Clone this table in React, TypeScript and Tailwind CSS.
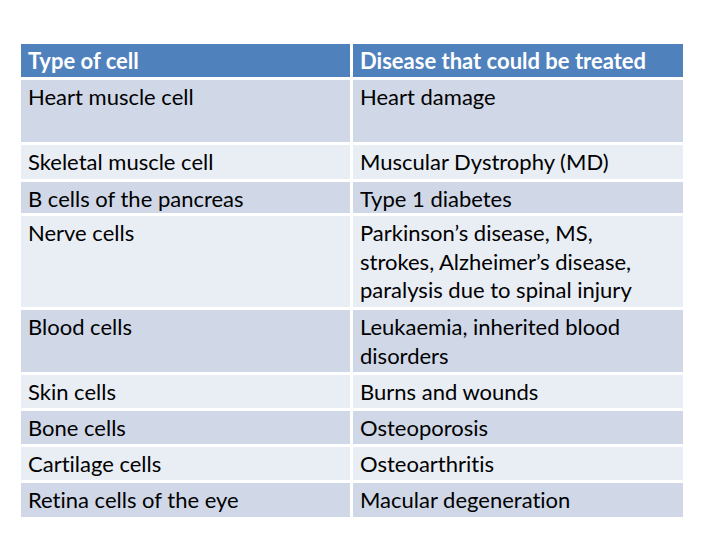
import React from "react";

type Row = {
  cell: React.ReactNode;
  disease: React.ReactNode;
  h: string;
  tone: "dark" | "light";
};

const rows: Row[] = [
  { cell: "Heart muscle cell", disease: "Heart damage", h: "h-[62px]", tone: "dark" },
  { cell: "Skeletal muscle cell", disease: "Muscular Dystrophy (MD)", h: "h-[34px]", tone: "light" },
  { cell: "B cells of the pancreas", disease: "Type 1 diabetes", h: "h-[31px]", tone: "dark" },
  {
    cell: "Nerve cells",
    disease: (
      <>
        Parkinson’s disease, MS,
        <br />
        strokes, Alzheimer’s disease,
        <br />
        paralysis due to spinal injury
      </>
    ),
    h: "h-[91px]",
    tone: "light",
  },
  {
    cell: "Blood cells",
    disease: (
      <>
        Leukaemia, inherited blood
        <br />
        disorders
      </>
    ),
    h: "h-[62px]",
    tone: "dark",
  },
  { cell: "Skin cells", disease: "Burns and wounds", h: "h-[33px]", tone: "light" },
  { cell: "Bone cells", disease: "Osteoporosis", h: "h-[33px]", tone: "dark" },
  { cell: "Cartilage cells", disease: "Osteoarthritis", h: "h-[33px]", tone: "light" },
  { cell: "Retina cells of the eye", disease: "Macular degeneration", h: "h-[34px]", tone: "dark" },
];

export default function App() {
  return (
    <div className="w-[720px] h-[540px] bg-white pt-[44px] pl-[21px] font-['Lato',sans-serif] text-[22px] leading-[28.5px] text-black [font-variant-ligatures:none]">
      <div className="grid w-[662px] grid-cols-[329px_330px] gap-[3px]">
        <div className="h-[33px] bg-[#4f81bd] pl-[7px] pt-[3px] font-bold text-white">Type of cell</div>
        <div className="h-[33px] bg-[#4f81bd] pl-[7px] pt-[3px] font-bold text-white">
          Disease that could be treated
        </div>
        {rows.map((r, i) => {
          const bg = r.tone === "dark" ? "bg-[#d0d8e8]" : "bg-[#e9edf4]";
          return (
            <React.Fragment key={i}>
              <div className={`${r.h} ${bg} pl-[7px] pt-[3px]`}>{r.cell}</div>
              <div className={`${r.h} ${bg} pl-[7px] pt-[3px]`}>{r.disease}</div>
            </React.Fragment>
          );
        })}
      </div>
    </div>
  );
}
